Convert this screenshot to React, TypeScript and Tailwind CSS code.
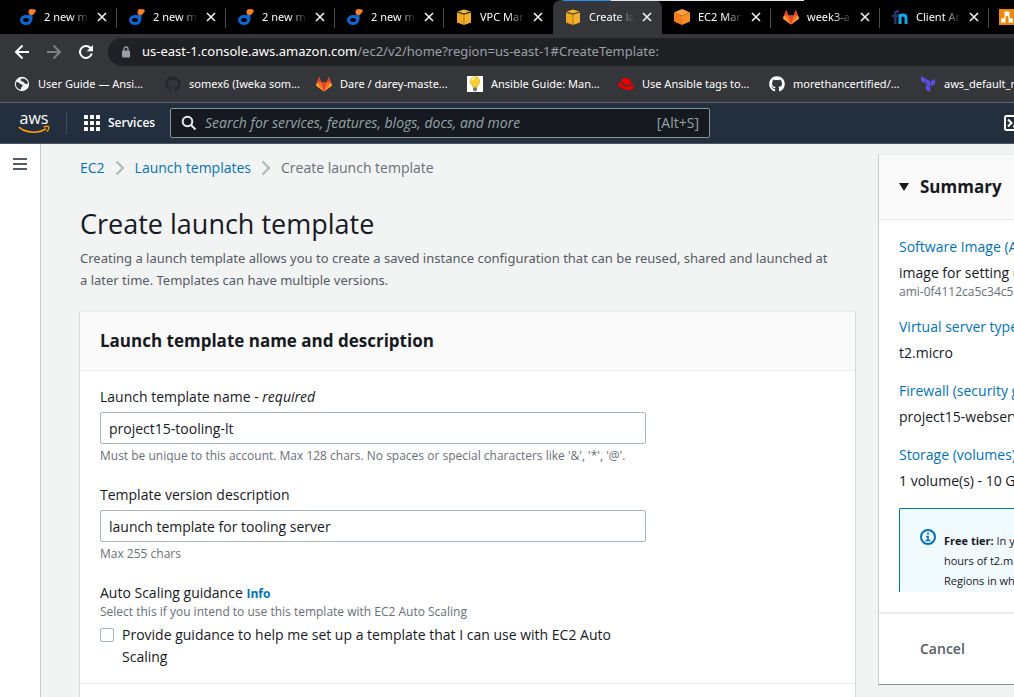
import React from "react";
import { FaGithub, FaRedhat } from "react-icons/fa";
import { SiTerraform } from "react-icons/si";

const chromeFont = "font-['Noto_Sans','Open_Sans',sans-serif]";

function DropletIcon() {
  return (
    <svg viewBox="0 0 16 16" className="size-4 shrink-0">
      <ellipse cx="6" cy="11" rx="4.5" ry="3.500" fill="none" stroke="#0b66d8" strokeWidth="3" />
      <path d="M8 5.500h4.500V11l-2.500.500Z" fill="#0b66d8" />
      <circle cx="11.500" cy="3" r="3" fill="#ff7e1d" />
      <circle cx="14" cy="2" r="1.800" fill="#ff7e1d" />
    </svg>
  );
}

function BoxIcon() {
  return (
    <svg viewBox="0 0 16 16" className="size-4 shrink-0">
      <path d="M1 3.500 8 5.500V16L1 13.500Z" fill="#efa91f" />
      <path d="M15 3.500 8 5.500V16l7-2.500Z" fill="#f3b02c" />
      <path d="M1.500 2.500 8 .5l6.500 2L8 4.500Z" fill="#f5b733" />
      <path d="M1 3.200 8 5.300l7-2.100M8 5.300V16" fill="none" stroke="#7d5514" strokeWidth=".6" />
    </svg>
  );
}

function CubeIcon() {
  return (
    <svg viewBox="0 0 16 16" className="size-4 shrink-0">
      <path d="M8 0 16 3.500 8 7 0 3.500Z" fill="#ff9f3d" />
      <path d="M0 3.500 8 7v9L0 12.500Z" fill="#f57c1a" />
      <path d="M16 3.500 8 7v9l8-3.500Z" fill="#f98d27" />
    </svg>
  );
}

function GitlabIcon() {
  return (
    <svg viewBox="0 0 16 16" className="size-4 shrink-0">
      <path d="M3.200 1 5.300 6.500h5.400L12.800 1 16 9.500 8 15.500 0 9.500Z" fill="#fc6d26" />
      <path d="M5.300 6.500h5.400L8 15.500Z" fill="#e24329" />
      <path d="M3.200 1 .9 6.500h4.400ZM12.800 1l-2.100 5.500h4.400Z" fill="#e24329" />
      <path d="M.9 6.500 0 9.500l8 6ZM15.100 6.500l.9 3-8 6Z" fill="#fca326" />
    </svg>
  );
}

function FnIcon() {
  return (
    <svg viewBox="0 0 16 16" className="size-4 shrink-0" fill="none" strokeWidth="3">
      <path d="M7 2.200H5.500Q3.300 2.200 3.300 4.500V15M0 7h6" stroke="#25366b" strokeWidth="2.400" />
      <path d="M8 15V5M8 8.500Q8 6 11 6t3 3v6" stroke="#12a8e8" />
    </svg>
  );
}

function DiagramIcon() {
  return (
    <svg viewBox="0 0 16 16" className="size-4 shrink-0">
      <rect width="16" height="16" fill="#f08705" />
      <path d="m8 4-4 8M8 4l4 8" stroke="#fff" strokeWidth="1.500" />
      <path d="M5.500 2.500h5v4h-5ZM2 9.500h4.500v4H2ZM9.500 9.500H14v4H9.500Z" fill="#fff" />
    </svg>
  );
}

function GlobeIcon() {
  return (
    <svg viewBox="0 0 16 16" className="size-4 shrink-0">
      <circle cx="8" cy="8" r="7.200" fill="#f1f3f4" />
      <path d="M2 6.500c2-1.500 3 .5 4.500 1.500 2 .5 3 1.500 1.500 2.800-1.200.7-1 1.500-1 2.700-3-.2-5-2.500-5-5ZM7.500 2.500c-1.500 1.500-.5 3 1 3s1.500 2.500 4.500 2.500l1-1C13.500 4 10.500 2 7.500 2.500Z" fill="#35363a" />
    </svg>
  );
}

function BulbIcon() {
  return (
    <svg viewBox="0 0 16 16" className="size-4 shrink-0">
      <rect width="16" height="16" fill="#fff" />
      <path d="M8 .8a4.800 4.800 0 0 1 4.800 4.800C12.800 8 10.500 9 10.300 11H5.700C5.500 9 3.200 8 3.200 5.600A4.800 4.800 0 0 1 8 .8Z" fill="#fcd02c" stroke="#c99a10" strokeWidth=".6" />
      <path d="M5 4.500A3 3 0 0 1 8 2" stroke="#fff6b8" strokeWidth="1.400" fill="none" />
      <path d="M6 11.500h4v2.500l-1 1.200H7L6 14Z" fill="#777" />
    </svg>
  );
}

const tabs = [
  { icon: <DropletIcon />, title: "2 new m", divider: true },
  { icon: <DropletIcon />, title: "2 new m", divider: true },
  { icon: <DropletIcon />, title: "2 new m", divider: true },
  { icon: <DropletIcon />, title: "2 new m", divider: true },
  { icon: <BoxIcon />, title: "VPC Mar" },
  { icon: <BoxIcon />, title: "Create la", active: true },
  { icon: <CubeIcon />, title: "EC2 Mar", divider: true },
  { icon: <GitlabIcon />, title: "week3-a", divider: true },
  { icon: <FnIcon />, title: "Client Ar", divider: true },
];

const bookmarks = [
  { icon: <GlobeIcon />, title: "User Guide — Ansi..." },
  { icon: <FaGithub className="size-4 shrink-0 text-[#24292e]" />, title: "somex6 (Iweka som..." },
  { icon: <GitlabIcon />, title: "Dare / darey-maste..." },
  { icon: <BulbIcon />, title: "Ansible Guide: Man..." },
  { icon: <FaRedhat className="size-4 shrink-0 text-[#ee0000]" />, title: "Use Ansible tags to..." },
  { icon: <FaGithub className="size-4 shrink-0 text-white" />, title: "morethancertified/..." },
  { icon: <SiTerraform className="size-4 shrink-0 text-[#5c4ee5]" />, title: "aws_default_r" },
];

function Browser() {
  return (
    <div className={`${chromeFont} shrink-0 bg-[#35363a] text-white`}>
      <div className="relative flex h-[34px] overflow-hidden bg-black pl-2">
        {tabs.map((tab, i) => (
          <div
            key={i}
            className={`relative flex w-[109px] shrink-0 items-center pl-3 ${tab.active ? "rounded-t-lg bg-[#35363a]" : ""}`}
          >
            {tab.icon}
            <span className="ml-2 w-[45px] whitespace-nowrap text-[11px] [mask-image:linear-gradient(to_right,black_60%,transparent)]">
              {tab.title}
            </span>
            <button aria-label={`Close ${tab.title}`} className="ml-[7px] flex size-3 items-center justify-center">
              <svg viewBox="0 0 10 10" className="size-[10px]">
                <path d="m1 1 8 8M9 1 1 9" stroke="#f1f3f4" strokeWidth="1.600" />
              </svg>
            </button>
            {tab.divider && <span className="absolute right-0 top-2 h-5 w-px bg-[#4a4d51]" />}
          </div>
        ))}
        <div className="flex shrink-0 items-center pl-[10px]">
          <DiagramIcon />
        </div>
        <div className="absolute left-[563px] top-0 flex h-px w-[241px] bg-[#e6e6e6]">
          <span className="w-12 bg-[#2f8bf0]" />
        </div>
      </div>
      <div className="flex h-9 items-center pl-[14px]">
        <div className="flex gap-4">
          <button aria-label="Back">
            <svg viewBox="0 0 16 16" className="size-4" fill="none" stroke="#fff" strokeWidth="2">
              <path d="M15 8H2M8.500 1.500 2 8l6.500 6.500" />
            </svg>
          </button>
          <button aria-label="Forward">
            <svg viewBox="0 0 16 16" className="size-4" fill="none" stroke="#7d7e81" strokeWidth="2">
              <path d="M1 8h13M7.500 1.500 14 8l-6.500 6.500" />
            </svg>
          </button>
          <button aria-label="Reload">
            <svg viewBox="0 0 16 16" className="size-4" fill="none" stroke="#fff" strokeWidth="2">
              <path d="M13.800 9.500A6 6 0 1 1 12.500 4L14 5.500" />
              <path d="M15 1v6.300H8.700Z" fill="#fff" stroke="none" />
            </svg>
          </button>
        </div>
        <div className="ml-[14px] flex h-7 flex-1 items-center overflow-hidden rounded-l-full bg-[#202124] pl-[14px]">
          <svg viewBox="0 0 8 12" className="h-3 w-2 shrink-0">
            <path d="M2 5V3a2 2 0 0 1 4 0v2" fill="none" stroke="#9aa0a6" strokeWidth="1.300" />
            <rect y="4.500" width="8" height="7" rx="1" fill="#9aa0a6" />
          </svg>
          <span className="ml-3 whitespace-nowrap text-[13px] text-[#9aa0a6]">
            <span className="text-white">us-east-1.console.aws.amazon.com</span>
            /ec2/v2/home?region=us-east-1#CreateTemplate:
          </span>
        </div>
      </div>
      <div className="flex h-8 items-center gap-4 overflow-hidden pb-1 pl-[14px]">
        {bookmarks.map((b) => (
          <a key={b.title} href="#" className="flex shrink-0 items-center gap-2">
            {b.icon}
            <span className="w-[111px] whitespace-nowrap text-[11px]">{b.title}</span>
          </a>
        ))}
      </div>
    </div>
  );
}

function AwsHeader() {
  return (
    <header className="flex h-[42px] shrink-0 items-center overflow-hidden border-t border-b border-t-[#5f6368] border-b-[#4a5464] bg-[#232f3e] pl-[18px] text-white">
      <a href="#" aria-label="AWS home" className="flex w-8 flex-col items-center">
        <span className="text-base font-medium leading-3">aws</span>
        <svg viewBox="0 0 32 9" className="mt-px h-[9px] w-8" fill="none" stroke="#ff9900">
          <path d="M.8 2.200C8 8.200 20 9 28 3.800" strokeWidth="1.700" />
          <path d="M25.500 2.200c2-.9 4.500-1 5.300-.4.300 1-.5 3.200-2 4.800" strokeWidth="1.300" />
        </svg>
      </a>
      <span className="ml-4 h-[22px] w-px bg-[#414b59]" />
      <button className="ml-[17px] flex items-center gap-2 text-xs font-semibold">
        <svg viewBox="0 0 16 16" className="size-4" fill="#fff">
          {[0, 6, 12].map((y) =>
            [0, 6, 12].map((x) => <rect key={`${x}-${y}`} x={x} y={y} width="4" height="4" rx=".6" />),
          )}
        </svg>
        <span className="w-[45px] text-left">Services</span>
      </button>
      <label className="ml-[17px] flex h-[30px] w-[540px] shrink-0 items-center rounded-xs border border-[#879596] bg-[#16191f] px-[10px]">
        <svg viewBox="0 0 16 16" className="size-4 shrink-0" fill="none" stroke="#eaeded" strokeWidth="2">
          <circle cx="6.500" cy="6.500" r="4.800" />
          <path d="m10 10 4.500 4.500" />
        </svg>
        <input
          type="search"
          aria-label="Search"
          placeholder="Search for services, features, blogs, docs, and more"
          className="ml-2 min-w-0 flex-1 bg-transparent text-sm italic outline-none placeholder:text-[#95a5a6]"
        />
        <span className="text-sm text-[#95a5a6]">[Alt+S]</span>
      </label>
      <button aria-label="CloudShell" className="ml-auto -mr-[6px] shrink-0">
        <svg viewBox="0 0 16 16" className="size-4" fill="none" stroke="#fff" strokeWidth="2">
          <rect x="1" y="1" width="14" height="14" rx="1.500" />
          <path d="m4 4.500 3.500 3.500L4 11.500M9 11.500h4" />
        </svg>
      </button>
    </header>
  );
}

function Chevron() {
  return (
    <svg viewBox="0 0 10 16" className="h-4 w-[10px]" fill="none" stroke="#aab7b8" strokeWidth="2">
      <path d="m1.500 1.500 6.500 6.500-6.500 6.500" />
    </svg>
  );
}

function TextField({ id, label, required, value, hint }: { id: string; label: string; required?: boolean; value: string; hint: string }) {
  return (
    <div>
      <label htmlFor={id} className="block text-sm leading-[22px]">
        {label}
        {required && (
          <>
            {" - "}
            <i>required</i>
          </>
        )}
      </label>
      <input
        id={id}
        defaultValue={value}
        className="mt-1 block h-8 w-[546px] max-w-full rounded-xs border border-[#aab7b8] bg-white px-2 text-sm outline-none"
      />
      <p className="mt-1 text-xs leading-4 text-[#687078]">{hint}</p>
    </div>
  );
}

function SummaryItem({ label, value, detail }: { label: string; value: string; detail?: string }) {
  return (
    <div className="text-sm">
      <a href="#" className="block leading-[22px] text-[#0073bb]">{label}</a>
      <p className="mt-1 leading-[22px]">{value}</p>
      {detail && <p className="text-xs leading-4 text-[#687078]">{detail}</p>}
    </div>
  );
}

export default function App() {
  return (
    <div className="flex h-screen flex-col overflow-hidden bg-[#f2f3f3] font-['Open_Sans','Noto_Sans',sans-serif] text-[#16191f]">
      <Browser />
      <AwsHeader />
      <div className="flex min-h-0 flex-1">
        <aside className="w-[41px] shrink-0 border-r border-[#c8cccc] bg-white pl-[13px] pt-[14px]">
          <button aria-label="Open navigation" className="block">
            <svg viewBox="0 0 14 12" className="h-3 w-[14px]" fill="#545b64">
              <path d="M0 0h14v2H0ZM0 5h14v2H0ZM0 10h14v2H0Z" />
            </svg>
          </button>
        </aside>
        <main className="min-w-0 flex-1 pl-[38px] pr-[22px] pt-[13px]">
          <nav aria-label="Breadcrumb" className="ml-px flex items-center gap-[10px] text-sm leading-[22px]">
            <a href="#" className="text-[#0073bb]">EC2</a>
            <Chevron />
            <a href="#" className="text-[#0073bb]">Launch templates</a>
            <Chevron />
            <span className="text-[#687078]">Create launch template</span>
          </nav>
          <h1 className="ml-px mt-[27px] text-[27px] leading-9">Create launch template</h1>
          <p className="ml-px mt-[5px] pr-6 font-['Noto_Sans','Open_Sans',sans-serif] text-[13px] leading-[22px] text-[#545b64]">
            Creating a launch template allows you to create a saved instance configuration that can be reused, shared and launched at a later time. Templates can have multiple versions.
          </p>
          <section className="mt-5 border border-t-[#eaeded] border-[#d5dbdb] bg-white">
            <h2 className="border-b border-[#eaeded] bg-[#fafafa] px-5 py-[18px] text-[17px] font-bold leading-[22px]">
              Launch template name and description
            </h2>
            <div className="flex flex-col gap-5 border-b border-[#eaeded] px-5 py-[15px]">
              <TextField
                id="name"
                label="Launch template name"
                required
                value="project15-tooling-lt"
                hint="Must be unique to this account. Max 128 chars. No spaces or special characters like '&', '*', '@'."
              />
              <TextField id="description" label="Template version description" value="launch template for tooling server" hint="Max 255 chars" />
              <div>
                <p className="text-sm leading-[22px]">
                  Auto Scaling guidance <a href="#" className="text-xs font-bold leading-4 text-[#0073bb]">Info</a>
                </p>
                <p className="text-xs leading-4 text-[#687078]">Select this if you intend to use this template with EC2 Auto Scaling</p>
                <label className="mt-1 flex w-[546px] max-w-full gap-2 text-sm leading-[22px]">
                  <input type="checkbox" className="mt-1 size-[14px] shrink-0 appearance-none rounded-xs border border-[#aab7b8] bg-white" />
                  <span className="max-w-[500px]">Provide guidance to help me set up a template that I can use with EC2 Auto Scaling</span>
                </label>
              </div>
            </div>
            <div className="h-12" />
          </section>
        </main>
        <aside className="mt-[10px] h-[531px] w-[136px] shrink-0 overflow-hidden whitespace-nowrap border-b border-l border-t border-b-[#879596] border-l-[#c4cccc] border-t-[#eaeded] bg-white">
          <h2 className="border-b border-[#eaeded] bg-[#fafafa]">
            <button className="flex h-16 items-center gap-[11px] pl-5 text-[17px] font-bold">
              <svg viewBox="0 0 10 8" className="h-2 w-[10px]" fill="#16191f">
                <path d="M0 0h10L5 8Z" />
              </svg>
              Summary
            </button>
          </h2>
          <div className="flex flex-col gap-4 pl-5 pt-4">
            <SummaryItem label="Software Image (A" value="image for setting u" detail="ami-0f4112ca5c34c5" />
            <SummaryItem label="Virtual server type" value="t2.micro" />
            <SummaryItem label="Firewall (security g" value="project15-webserv" />
            <SummaryItem label="Storage (volumes)" value="1 volume(s) - 10 G" />
            <div className="flex h-[84px] gap-2 overflow-hidden rounded-tl-xs border-l border-t border-[#0073bb] bg-[#f1faff] pl-5 pt-5">
              <svg viewBox="0 0 16 16" className="size-4 shrink-0" fill="none" stroke="#0073bb" strokeWidth="2">
                <circle cx="8" cy="8" r="7" />
                <path d="M8 3.500v2M6 7.500h2v4M5.500 11.500h5" strokeWidth="1.700" />
              </svg>
              <p className="pt-[2px] text-[11px] leading-5">
                <b className="font-bold">Free tier:</b> In y
                <br />
                hours of t2.m
                <br />
                Regions in wh
              </p>
            </div>
          </div>
          <div className="mt-5 border-t-2 border-[#eaeded] pl-[41px] pt-6">
            <button className="block text-sm font-semibold leading-[22px] text-[#545b64]">Cancel</button>
          </div>
        </aside>
      </div>
    </div>
  );
}
